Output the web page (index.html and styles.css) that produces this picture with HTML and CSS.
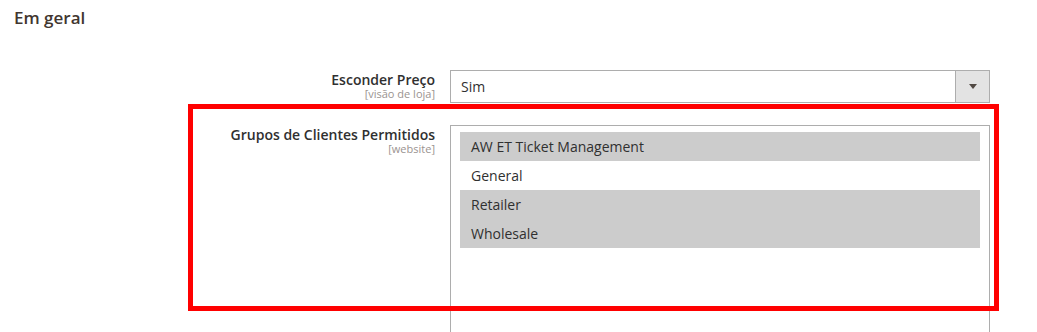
FILE: index.html
```html
<!DOCTYPE html>
<html lang="pt">
<head>
  <meta charset="UTF-8">
  <title>Em geral</title>
  <link rel="stylesheet" href="styles.css">
</head>
<body>
  <!-- Section title -->
  <h2 class="section-title">Em geral</h2>

  <!-- Config fields -->
  <div class="fieldset">
    <div class="field">
      <div class="field-label">
        <label>Esconder Preço</label>
        <span class="scope">[visão de loja]</span>
      </div>
      <div class="control">
        <div class="select">
          <span class="select-value">Sim</span>
          <span class="select-arrow"></span>
        </div>
      </div>
    </div>

    <div class="field">
      <div class="field-label">
        <label>Grupos de Clientes Permitidos</label>
        <span class="scope">[website]</span>
      </div>
      <div class="control">
        <div class="multiselect">
          <div class="option selected">AW ET Ticket Management</div>
          <div class="option">General</div>
          <div class="option selected">Retailer</div>
          <div class="option selected">Wholesale</div>
        </div>
      </div>
    </div>
  </div>

  <!-- Annotation box -->
  <div class="highlight"></div>
</body>
</html>
```

FILE: styles.css
```css
/* General Styles */
body {
  font-family: 'Open Sans', 'Liberation Sans', sans-serif;
  margin: 0;
  padding: 0;
  background-color: #fff;
  color: #303030;
  position: relative;
  height: 332px;
  overflow: hidden;
}

/* Section title */
.section-title {
  margin: 8px 0 0 14px;
  font-size: 17px;
  line-height: 20px;
  font-weight: 600;
  color: #41362f;
}

/* Fields */
.fieldset {
  margin-top: 42px;
  display: flex;
  flex-direction: column;
  gap: 22px;
}

.field {
  display: grid;
  grid-template-columns: 435px 540px;
  column-gap: 15px;
}

.field-label {
  text-align: right;
}

.field-label label {
  display: block;
  padding-top: 1px;
  font-size: 14px;
  line-height: 17px;
  font-weight: 600;
  color: #303030;
}

.scope {
  display: block;
  font-size: 11px;
  line-height: 12px;
  color: #9a9390;
}

/* Select */
.select {
  display: flex;
  height: 33px;
  border: 1px solid #adadad;
  box-sizing: border-box;
}

.select-value {
  flex: 1;
  padding-left: 10px;
  font-size: 14px;
  line-height: 31px;
}

.select-arrow {
  width: 33px;
  background-color: #e3e3e3;
  border-left: 1px solid #adadad;
  display: flex;
  align-items: center;
  justify-content: center;
}

.select-arrow::after {
  content: '';
  border-top: 5px solid #514943;
  border-left: 4px solid transparent;
  border-right: 4px solid transparent;
}

/* Multiselect */
.multiselect {
  height: 220px;
  border: 1px solid #adadad;
  padding: 6px 9px;
}

.option {
  height: 29px;
  line-height: 29px;
  padding-left: 11px;
  font-size: 14px;
  color: #303030;
}

.option.selected {
  background-color: #cccccc;
}

/* Annotation */
.highlight {
  position: absolute;
  left: 188px;
  top: 104px;
  width: 801px;
  height: 197px;
  border: 5px solid #ff0000;
}
```
